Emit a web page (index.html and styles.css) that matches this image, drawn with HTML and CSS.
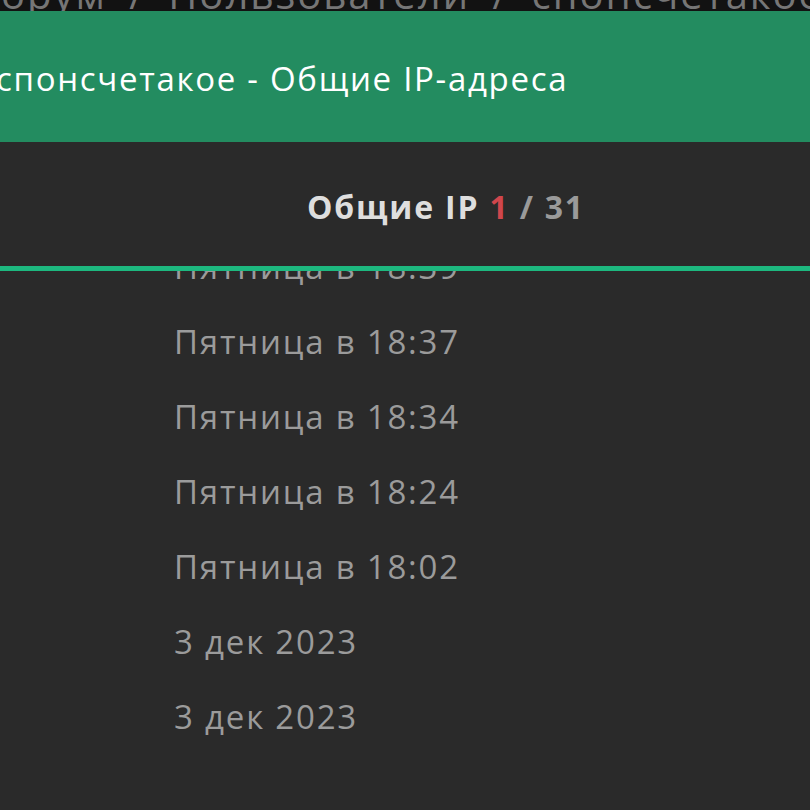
FILE: index.html
```html
<!DOCTYPE html>
<html lang="ru">
<head>
    <meta charset="UTF-8">
    <meta name="viewport" content="width=device-width, initial-scale=1.0">
    <title>Общие IP-адреса</title>
    <link rel="stylesheet" href="styles.css">
</head>
<body>
    <!-- Breadcrumbs peeking out from behind the overlay -->
    <div class="crumbs">
        <div class="crumbs-inner">Форум <span class="sep">/</span> Пользователи <span class="sep">/</span> спонсчетакое</div>
    </div>

    <!-- Overlay title bar -->
    <div class="titlebar">
        <h1>спонсчетакое - Общие IP-адреса</h1>
    </div>

    <!-- Tab header with counter -->
    <div class="subhead">
        <h2>Общие IP <span class="current">1</span> <span class="total">/ 31</span></h2>
    </div>
    <div class="tab-line"></div>

    <!-- Scrolled list of visits -->
    <div class="list">
        <ul>
            <li>Пятница в 18:39</li>
            <li>Пятница в 18:37</li>
            <li>Пятница в 18:34</li>
            <li>Пятница в 18:24</li>
            <li>Пятница в 18:02</li>
            <li>3 дек 2023</li>
            <li>3 дек 2023</li>
        </ul>
    </div>
</body>
</html>
```

FILE: styles.css
```css
/* Dark page, Open Sans everywhere */
body {
    margin: 0;
    height: 810px;
    overflow: hidden;
    background: #2a2a2a;
    font-family: "Open Sans", "Noto Sans", sans-serif;
}

/* Only the bottom of the breadcrumbs is visible */
.crumbs {
    height: 11px;
    overflow: hidden;
    background: #121212;
}

.crumbs-inner {
    margin: -26px 0 0 -33px;
    color: #767676;
    font-size: 40px;
    line-height: 40px;
    letter-spacing: 2px;
    white-space: nowrap;
}

.crumbs .sep {
    margin: 0 10px;
}

/* Green title bar */
.titlebar {
    height: 131px;
    background: #238c60;
    display: flex;
    align-items: center;
}

.titlebar h1 {
    margin: 3px 0 0 -4px;
    font-size: 33px;
    font-weight: 400;
    letter-spacing: 1.7px;
    color: #fff;
    white-space: nowrap;
}

/* Counter header */
.subhead {
    height: 124px;
    display: flex;
    align-items: center;
    justify-content: center;
    padding-left: 82px;
}

.subhead h2 {
    margin: 4px 0 0;
    font-size: 32px;
    font-weight: 700;
    letter-spacing: 1.8px;
    color: #dedede;
}

.subhead .current {
    color: #d0464c;
}

.subhead .total {
    color: #9a9a9a;
}

.tab-line {
    height: 5px;
    background: #1db87f;
}

/* Visit list, scrolled a bit */
.list {
    height: 540px;
    overflow: hidden;
}

.list ul {
    list-style: none;
    margin: -42px 0 0;
    padding: 0 0 0 174px;
}

.list li {
    font-size: 33px;
    line-height: 75px;
    letter-spacing: 1.8px;
    color: #9b9b9b;
}
```
